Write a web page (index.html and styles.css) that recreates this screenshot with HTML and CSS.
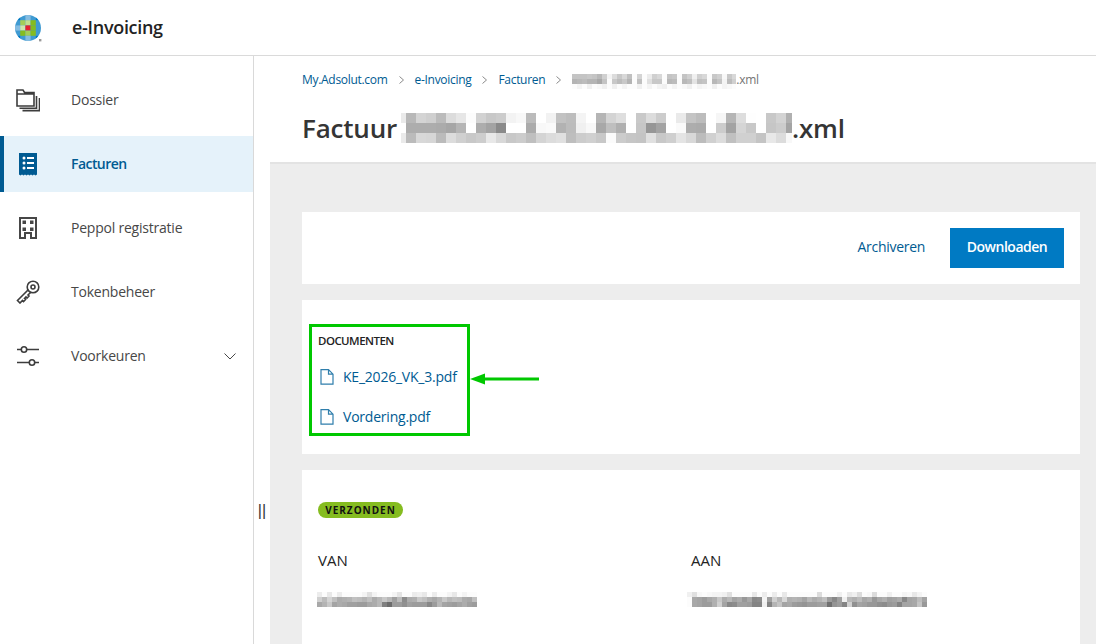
FILE: index.html
```html
<!DOCTYPE html>
<html lang="nl">
<head>
<meta charset="utf-8">
<title>e-Invoicing</title>
<link rel="stylesheet" href="styles.css">
</head>
<body>
<header class="topbar">
  <svg class="logo" viewBox="0 0 30 30" width="30" height="30">
    <defs><clipPath id="logo-clip"><circle cx="15" cy="15" r="13"/></clipPath></defs>
    <g clip-path="url(#logo-clip)">
      <rect x="2" y="2" width="26" height="26" fill="#409bd2"/>
      <rect x="2" y="2" width="5.2" height="5.2" fill="#007ac3"/>
      <rect x="12.4" y="2" width="5.2" height="5.2" fill="#85bce1"/>
      <rect x="22.8" y="2" width="5.2" height="5.2" fill="#007ac3"/>
      <rect x="7.2" y="7.2" width="5.2" height="5.2" fill="#a4cd58"/>
      <rect x="12.4" y="7.2" width="5.2" height="5.2" fill="#c2dd8f"/>
      <rect x="17.6" y="7.2" width="5.2" height="5.2" fill="#85bc20"/>
      <rect x="2" y="12.4" width="5.2" height="5.2" fill="#85bce1"/>
      <rect x="7.2" y="12.4" width="5.2" height="5.2" fill="#d2e4ae"/>
      <rect x="12.4" y="12.4" width="5.2" height="5.2" fill="#e5202e"/>
      <rect x="17.6" y="12.4" width="5.2" height="5.2" fill="#85bc20"/>
      <rect x="7.2" y="17.6" width="5.2" height="5.2" fill="#85bc20"/>
      <rect x="12.4" y="17.6" width="5.2" height="5.2" fill="#a4cd58"/>
      <rect x="17.6" y="17.6" width="5.2" height="5.2" fill="#85bc20"/>
      <rect x="2" y="22.8" width="5.2" height="5.2" fill="#007ac3"/>
      <rect x="12.4" y="22.8" width="5.2" height="5.2" fill="#85bce1"/>
      <rect x="22.8" y="22.8" width="5.2" height="5.2" fill="#007ac3"/>
    </g>
    <rect x="26" y="26" width="2.4" height="2.4" fill="#9a9a9a"/>
  </svg>
  <span class="app-name">e-Invoicing</span>
</header>

<div class="shell">
  <nav class="sidebar">
    <a class="nav-item">
      <svg class="nav-icon" viewBox="0 0 24 24"><path d="M1 18V2h6l1.5 2.5H18V18zM1 6h17M3.5 20.2H20.5V8M6.500 22.600H23.500V10"/></svg>
      <span>Dossier</span>
    </a>
    <a class="nav-item active">
      <svg class="nav-icon" viewBox="0 0 24 24"><path class="fill-blue" d="M3 1h18v21.500l-1.500 1-1.500-1-1.500 1-1.500-1-1.500 1-1.500-1-1.500 1-1.500-1-1.500 1-1.500-1-1.500 1L3 22.500z"/><path class="white-line" d="M11 6h7M11 11h7M11 16h7"/><circle class="white-dot" cx="8" cy="6" r="1.500"/><circle class="white-dot" cx="8" cy="11" r="1.500"/><circle class="white-dot" cx="8" cy="16" r="1.500"/></svg>
      <span>Facturen</span>
    </a>
    <a class="nav-item">
      <svg class="nav-icon thick" viewBox="0 0 24 24"><path d="M4 2h16v20h-5v-5H9v5H4z"/><path class="solid" d="M6.500 4.500H10V8H6.500zM14 4.500h3.500V8H14zM6.500 11.500H10V15H6.500zM14 11.500h3.500V15H14z"/></svg>
      <span>Peppol registratie</span>
    </a>
    <a class="nav-item">
      <svg class="nav-icon" viewBox="0 0 24 24"><circle cx="17" cy="7" r="5.800"/><circle cx="17" cy="7" r="2"/><path d="M12.500 9.500 1.500 20.500 4 23l2.500-2.500 1 1 2-2-1-1 1.500-1.500 1 1 2-2-1-1 2.500-2.500"/></svg>
      <span>Tokenbeheer</span>
    </a>
    <a class="nav-item">
      <svg class="nav-icon" viewBox="0 0 24 24"><path d="M1 5.500h4.500M10.500 5.500H23M1 18.500h12.500M18.500 18.500H23"/><circle cx="8" cy="5.500" r="2.700"/><circle cx="16" cy="18.500" r="2.700"/></svg>
      <span>Voorkeuren</span>
      <svg class="nav-chevron" viewBox="0 0 12 7"><path d="M.5.500 6 6 11.500.500"/></svg>
    </a>
  </nav>

  <div class="splitter"><span class="grip">||</span></div>

  <main class="content">
    <section class="page-head">
      <ol class="crumbs">
        <li><a>My.Adsolut.com</a></li>
        <li class="sep"><svg viewBox="0 0 5 8"><path d="M.5.500 4.500 4 .5 7.500"/></svg></li>
        <li><a>e-Invoicing</a></li>
        <li class="sep"><svg viewBox="0 0 5 8"><path d="M.5.500 4.500 4 .5 7.500"/></svg></li>
        <li><a>Facturen</a></li>
        <li class="sep"><svg viewBox="0 0 5 8"><path d="M.5.500 4.500 4 .5 7.500"/></svg></li>
        <li class="crumb-file"><svg class="mosaic crumb-mosaic" data-cell="5" data-rows="c4c4c4c8c4b8d0f4dcc8d8c0fcd4fcecd0d8fcc4c8fcc4d0f0d0d8fcc8d0f8c8d8 b4b8bcb4b4a8c4fcc8bcc8b4fcc0fce0c8c8fcb8bcfcb8c0e4c0c4fcb8c4f4bcd0 fcf4fcf0fcf8f0fcf0fcf4fcfcf0fcf4fcf4f0fcf4fcf8f0fcf4f8fcf0fcf4f8fc"></svg><span>.xml</span></li>
      </ol>
      <h1 class="title">
        <span>Factuur</span>
        <svg class="mosaic title-mosaic" data-cell="10" data-skip="5" data-rows="eab8d4cfbbdce6fcd2c8ccf3f8bbfff2c2bdf4ffb5d4deffc9dcccffeac4bcfff6b5ddfeffc8d3b0 ffadadadaba6b5ffada38affffabf8fab2bcf0f8a8bfb0ffc696a3fffaadabffcca3d5c8ffc6cca4 eabbd8d6bbdcd0c8cde8d8c8ccbfd4dce0beccd0c8fbccc6c4e0c8cfe4d8bcd0dcc0d0d0c4e8dcf8"></svg>
        <span class="title-ext">.xml</span>
      </h1>
    </section>

    <section class="canvas">
      <div class="card actions">
        <a class="link-action">Archiveren</a>
        <button class="btn-primary" type="button">Downloaden</button>
      </div>

      <div class="card docs-card">
        <div class="docs">
          <div class="docs-label">DOCUMENTEN</div>
          <a class="doc"><svg class="doc-icon" viewBox="0 0 14 16"><path d="M1 .7h7.500L13 5.200v10H1zM8.500.7v4.500H13"/></svg><span>KE_2026_VK_3.pdf</span></a>
          <a class="doc"><svg class="doc-icon" viewBox="0 0 14 16"><path d="M1 .7h7.500L13 5.200v10H1zM8.500.7v4.500H13"/></svg><span>Vordering.pdf</span></a>
        </div>
        <svg class="arrow" viewBox="0 0 70 14"><path class="arrow-head" d="M0 7 15 1.500v11z"/><path class="arrow-line" d="M12 7h57"/></svg>
      </div>

      <div class="card parties">
        <span class="badge">VERZONDEN</span>
        <div class="party-grid">
          <div class="party">
            <div class="party-label">VAN</div>
            <svg class="mosaic name-mosaic" data-cell="5" data-rows="ecfce8fcecfcfcfcfcf4e0f4fcfcfcf4e4fcfcecf0e8fcecfcfcf4e8fcf4fcfc d0bcd4c0acb0b4c0bcb4c0acb8c8b8a0bc8cacb0c8c0b0a8b4c8b8c0bcaca8c0 a8b4c8a4aca8a0a09c9ca8acb8806c9c9c90a09c9c9c889cb8a4a09ca4aca09c"></svg>
          </div>
          <div class="party party-to">
            <div class="party-label">AAN</div>
            <svg class="mosaic name-mosaic wide" data-cell="5" data-rows="f0e0f8fcf8f4f4f0e0fcfcfcfce8fcecfcecfce8fcfcfcfcfcfcdcfcfcfcf0fce8f0dcfcf8dcfcfcf0fcfcf4f8e8f4fcf0 fca8a49ca8b0c8acb8a4ac98a8888cf4a0d0b8d8b0b4b0a4b8acb4c09c88a0f0b8b0bca8b098a8b0a0a4ac88a4a8bca49ca0 fca8a49c9cb0d0a4888ca0a09c8484f084b4c4a4a89c98949c9ca0a070949c84d090a4a09898908c989c84a4a4a8c4989494"></svg>
          </div>
        </div>
      </div>
    </section>
  </main>
</div>
<script src="mosaic.js"></script>
</body>
</html>
```
FILE: styles.css
```css
* { box-sizing: border-box; }
html, body { height: 100%; }
body {
  margin: 0;
  overflow: hidden;
  background: #fff;
  color: #353535;
  font-family: "Open Sans", "Noto Sans", sans-serif;
  font-size: 14px;
  display: flex;
  flex-direction: column;
}
a { color: inherit; text-decoration: none; }

.topbar {
  flex: none;
  height: 56px;
  display: flex;
  align-items: center;
  padding-left: 13px;
  border-bottom: 1px solid #dadada;
  gap: 29px;
}
.logo { display: block; margin-top: 1px; }
.app-name { font-size: 18px; font-weight: 600; color: #232323; letter-spacing: -.3px; margin-bottom: 2px; }

.shell { flex: 1; min-height: 0; display: flex; }

.sidebar {
  flex: none;
  width: 254px;
  border-right: 1px solid #d9d9d9;
  padding-top: 16px;
  display: flex;
  flex-direction: column;
  gap: 8px;
}
.nav-item {
  height: 56px;
  display: flex;
  align-items: center;
  padding: 0 17px 0 16px;
  gap: 31px;
  color: #474747;
  letter-spacing: -.22px;
}
.nav-item span { margin-bottom: 2px; }
.nav-item.active {
  background: #e5f2fa;
  box-shadow: inset 4px 0 0 #005b92;
  color: #005b92;
  font-weight: 600;
  letter-spacing: -.55px;
}
.nav-icon {
  flex: none;
  width: 24px;
  height: 24px;
  fill: none;
  stroke: #3d3d3d;
  stroke-width: 1.6;
}
.nav-icon.thick { stroke-width: 2; stroke: #474747; }
.nav-icon .solid { fill: #474747; stroke: none; }
.nav-icon .fill-blue { fill: #005b92; stroke: none; }
.nav-icon .white-line { stroke: #fff; stroke-width: 2; }
.nav-icon .white-dot { fill: #fff; stroke: none; }
.nav-chevron {
  margin-left: auto;
  width: 12px;
  height: 7px;
  fill: none;
  stroke: #474747;
  stroke-width: 1;
}

.splitter {
  flex: none;
  width: 16px;
  padding-top: 444px;
  text-align: center;
}
.grip {
  font-family: "Liberation Sans", sans-serif;
  font-size: 16px;
  line-height: 22px;
  color: #353535;
}

.content { flex: 1; min-width: 0; display: flex; flex-direction: column; }

.page-head {
  flex: none;
  height: 108px;
  padding: 13px 32px 0;
  border-bottom: 2px solid #e3e3e3;
}
.crumbs {
  list-style: none;
  margin: 0;
  padding: 0;
  height: 20px;
  display: flex;
  align-items: center;
  gap: 11px;
  font-size: 12px;
  letter-spacing: -.3px;
  color: #005b92;
}
.crumbs .sep { display: flex; margin-top: 1px; }
.crumbs .sep svg { width: 5px; height: 8px; fill: none; stroke: #8a8a8a; stroke-width: 1; }
.crumb-file { display: flex; align-items: center; color: #757575; }

.mosaic { display: block; flex: none; }
.crumb-mosaic { width: 164px; height: 15px; margin-top: 4px; }
.title-mosaic { width: 391px; height: 30px; margin-left: 4px; }

.title {
  margin: 21px 0 0;
  height: 36px;
  display: flex;
  align-items: center;
  font-size: 26px;
  font-weight: 600;
  color: #353535;
  letter-spacing: -.2px;
}

.canvas {
  flex: 1;
  min-height: 0;
  background: #ededed;
  padding: 48px 16px 0 32px;
  display: flex;
  flex-direction: column;
  gap: 16px;
}
.card { background: #fff; flex: none; }

.actions {
  height: 72px;
  padding: 16px;
  display: flex;
  align-items: center;
  justify-content: flex-end;
  gap: 25px;
}
.link-action { color: #005b92; letter-spacing: -.3px; margin-bottom: 3px; }
.btn-primary {
  width: 114px;
  height: 40px;
  border: 0;
  padding: 0 0 3px;
  background: #007ac3;
  color: #fff;
  font: 600 14px "Open Sans", "Noto Sans", sans-serif;
  letter-spacing: -.5px;
}

.docs-card {
  position: relative;
  height: 154px;
  padding: 24px 0 0 7px;
}
.docs {
  width: 161px;
  height: 112px;
  border: 3px solid #00c800;
  padding: 4px 0 0 6px;
}
.docs-label { font-size: 11.5px; font-weight: 600; line-height: 20px; color: #232323; letter-spacing: -.55px; }
.doc {
  height: 40px;
  display: flex;
  align-items: center;
  gap: 9px;
  padding-left: 2px;
  color: #005b92;
  letter-spacing: -.22px;
}
.doc span { margin-bottom: 2px; }
.docs-label + .doc { margin-top: 6px; }
.doc-icon { flex: none; width: 14px; height: 16px; fill: none; stroke: #2f7eac; stroke-width: 1.2; }
.arrow {
  position: absolute;
  left: 168px;
  top: 72px;
  width: 70px;
  height: 14px;
}
.arrow-head { fill: #00c800; }
.arrow-line { stroke: #00c800; stroke-width: 3; fill: none; }

.parties { flex: 1; min-height: 0; overflow: hidden; padding: 32px 16px 0; }
.badge {
  display: block;
  width: 85px;
  height: 16px;
  border-radius: 8px;
  background: #85bc20;
  color: #111;
  font-size: 10px;
  font-weight: 700;
  line-height: 16px;
  text-align: center;
  letter-spacing: 1px;
}
.party-grid { display: grid; grid-template-columns: 1fr 1fr; margin-top: 31px; }
.party-label { font-size: 15px; line-height: 22px; color: #232323; }
.name-mosaic { width: 160px; height: 15px; margin: 21px 0 0 -1px; }
.name-mosaic.wide { width: 240px; margin-left: -4px; }
```
FILE: mosaic.js
```js
document.querySelectorAll('.mosaic').forEach(function (svg) {
  var NS = 'http://www.w3.org/2000/svg';
  var cell = +svg.dataset.cell;
  var skip = +(svg.dataset.skip || 0);
  var rows = svg.dataset.rows.split(' ');
  var cols = rows[0].length / 2;
  svg.setAttribute('viewBox', skip + ' 0 ' + (cols * cell - skip) + ' ' + rows.length * cell);
  svg.setAttribute('preserveAspectRatio', 'xMinYMin slice');
  svg.setAttribute('shape-rendering', 'crispEdges');
  rows.forEach(function (row, y) {
    for (var x = 0; x < cols; x++) {
      var g = row.substr(x * 2, 2);
      var r = document.createElementNS(NS, 'rect');
      r.setAttribute('x', x * cell);
      r.setAttribute('y', y * cell);
      r.setAttribute('width', cell);
      r.setAttribute('height', cell);
      r.setAttribute('fill', '#' + g + g + g);
      svg.appendChild(r);
    }
  });
});
```
